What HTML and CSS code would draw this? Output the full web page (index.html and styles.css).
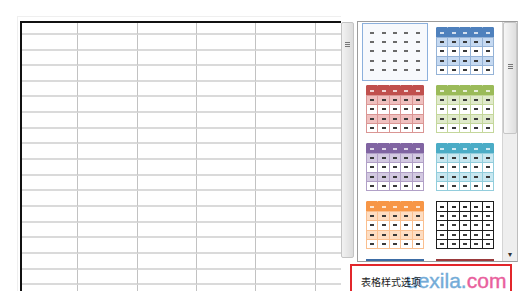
FILE: index.html
```html
<!DOCTYPE html>
<html lang="zh-CN">
<head>
    <meta charset="UTF-8">
    <meta name="viewport" content="width=device-width, initial-scale=1.0">
    <title>表格样式</title>
    <link rel="stylesheet" href="styles.css">
</head>
<body>
    <div class="app">
        <div class="sheet-area">
            <div class="frame">
                <div class="sheet" id="sheet">
                    <!-- cells are added by the script -->
                </div>
            </div>
        </div>

        <div class="vscroll">
            <div class="vthumb"><span class="grip"></span></div>
        </div>

        <div class="pane">
            <div class="gallery">
                <div class="items">
                    <div class="item selected"><div class="thumb plain"></div></div>
                    <div class="item"><div class="thumb blue"></div></div>
                    <div class="item"><div class="thumb red"></div></div>
                    <div class="item"><div class="thumb green"></div></div>
                    <div class="item"><div class="thumb purple"></div></div>
                    <div class="item"><div class="thumb cyan"></div></div>
                    <div class="item"><div class="thumb orange"></div></div>
                    <div class="item"><div class="thumb black"></div></div>
                    <div class="item"><div class="thumb navy"></div></div>
                    <div class="item"><div class="thumb maroon"></div></div>
                </div>
                <div class="gscroll">
                    <div class="gthumb"><span class="grip"></span></div>
                    <div class="gtrack"></div>
                    <div class="gdown">&#9662;</div>
                </div>
            </div>
            <div class="section">
                <span class="label">表格样式选项</span>
            </div>
        </div>
    </div>

    <div class="watermark"><span class="wm-blue">uexila.</span><span class="wm-pink">com</span></div>
    <div class="highlight"></div>

    <script>
        const sheet = document.getElementById('sheet');
        for (let i = 0; i < 18 * 6; i++) {
            const cell = document.createElement('div');
            cell.className = 'cell';
            sheet.appendChild(cell);
        }

        document.querySelectorAll('.thumb').forEach(thumb => {
            for (let r = 0; r < 5; r++) {
                for (let c = 0; c < 5; c++) {
                    const cell = document.createElement('div');
                    cell.className = 'c';
                    if (r === 0) cell.classList.add('hd');
                    if (r === 1 || r === 3) cell.classList.add('band');
                    thumb.appendChild(cell);
                }
            }
        });
    </script>
</body>
</html>
```

FILE: styles.css
```css
body {
    margin: 0;
    background-color: #fff;
    font-family: "Noto Sans CJK SC", "Liberation Sans", sans-serif;
    overflow: hidden;
}
.app {
    display: flex;
    width: 518px;
    height: 291px;
    overflow: hidden;
}

/* worksheet */
.sheet-area {
    width: 341px;
    flex-shrink: 0;
    padding: 16px 0 0 17px;
    box-sizing: border-box;
}
.frame {
    height: 100%;
    border-top: 1px solid #efefef;
    border-left: 1px solid #efefef;
    padding: 4px 0 0 2px;
    box-sizing: border-box;
}
.sheet {
    display: grid;
    grid-template-columns: 56px 60px 59px 59px 60px 1fr;
    grid-template-rows: 12px 16px 15px 16px 15px 16px 16px 15px 16px 16px 15px 16px 16px 15px 16px 16px 15px 16px;
    border-top: 2px solid #111;
    border-left: 2px solid #111;
}
.cell {
    box-sizing: border-box;
    border-bottom: 2px solid #dadada;
    border-right: 1px solid #c2c2c2;
}
.cell:nth-child(6n) {
    border-right: none;
}

/* sheet scrollbar */
.vscroll {
    width: 13px;
    flex-shrink: 0;
    padding-top: 22px;
}
.vthumb {
    height: 236px;
    box-sizing: border-box;
    border: 1px solid #c4c4c4;
    border-radius: 2px;
    background: linear-gradient(to right, #f2f2f2, #dcdcdc);
    padding-top: 19px;
    display: flex;
    justify-content: center;
}
.grip {
    width: 5px;
    height: 5px;
    background: repeating-linear-gradient(to bottom, #777 0, #777 1px, transparent 1px, transparent 2px);
}

/* task pane */
.pane {
    flex: 1;
    padding: 21px 2px 0 3px;
    display: flex;
    flex-direction: column;
}
.gallery {
    display: flex;
    height: 241px;
    border: 1px solid #9c9c9c;
    border-right-color: #bdbdbd;
    box-sizing: border-box;
}
.items {
    width: 144px;
    padding: 1px 0 0 4px;
    display: grid;
    grid-template-columns: 66px 66px;
    grid-auto-rows: 58px;
    column-gap: 4px;
    overflow: hidden;
    box-sizing: border-box;
}
.item {
    padding: 4px;
    box-sizing: border-box;
    border: 1px solid transparent;
}
.item.selected {
    border-color: #8cb0dc;
    background-color: #f7f9fc;
}
.thumb {
    --line: #fff;
    --hd: #fff;
    --band: #fff;
    --dash: #3a3a3a;
    --hdash: rgba(255, 255, 255, 0.75);
    width: 58px;
    height: 48px;
    margin: -1px;
    display: grid;
    grid-template-columns: repeat(5, 1fr);
    grid-template-rows: 9px repeat(4, 1fr);
    gap: 1px;
    padding: 1px;
    box-sizing: border-box;
    background-color: var(--line);
}
.c {
    display: flex;
    align-items: center;
    justify-content: center;
    background-color: #fff;
}
.c::after {
    content: "";
    width: 4px;
    height: 2px;
    background-color: var(--dash);
}
.c.band {
    background-color: var(--band);
}
.c.hd {
    background-color: var(--hd);
    box-shadow: 1px 0 0 var(--hd), -1px 0 0 var(--hd), 0 -1px 0 var(--hd);
}
.c.hd::after {
    background-color: var(--hdash);
}

.thumb.plain {
    background-color: transparent;
    --dash: #6a6a6a;
    --hdash: #6a6a6a;
}
.thumb.plain .c {
    background-color: transparent;
    box-shadow: none;
}
.blue   { --line: #95b3d7; --hd: #4f81bd; --band: #c5d9f1; }
.red    { --line: #da9694; --hd: #c0504d; --band: #efc0bf; }
.green  { --line: #c4d79b; --hd: #9bbb59; --band: #e0eacb; }
.purple { --line: #b1a0c7; --hd: #8064a2; --band: #d3c9e1; }
.cyan   { --line: #92cddc; --hd: #4bacc6; --band: #c8e7f0; }
.orange { --line: #fabf8f; --hd: #f79646; --band: #fdddc2; }
.black  { --line: #1e1e1e; --hd: #fff; --band: #fff; --hdash: #2a2a2a; }
.black .c.hd {
    box-shadow: none;
}
.navy   { --line: #3d6ca5; --hd: #3d6ca5; }
.maroon { --line: #9a3a3c; --hd: #9a3a3c; }

/* gallery scrollbar */
.gscroll {
    width: 14px;
    margin-left: auto;
    display: flex;
    flex-direction: column;
    background-color: #eeeeee;
    border-left: 1px solid #d4d4d4;
}
.gthumb {
    height: 112px;
    box-sizing: border-box;
    border: 1px solid #c6c6c6;
    border-radius: 2px;
    background: linear-gradient(to right, #f6f6f6, #dedede);
    padding-top: 41px;
    display: flex;
    justify-content: center;
}
.gtrack {
    flex: 1;
}
.gdown {
    height: 14px;
    font-size: 8px;
    line-height: 14px;
    text-align: center;
    color: #333;
}

.section {
    padding: 14px 0 0 4px;
    font-size: 10px;
    line-height: 12px;
}
.label {
    position: relative;
    z-index: 2;
    color: #1d1d1d;
}

/* screenshot annotations */
.watermark {
    position: absolute;
    left: 406px;
    top: 270px;
    font-family: "Liberation Sans", Arial, sans-serif;
    font-size: 21px;
    line-height: 21px;
    z-index: 1;
    -webkit-text-stroke: 0.4px currentColor;
}
.wm-blue {
    color: #74acd8;
}
.wm-pink {
    color: #e9609d;
}
.highlight {
    position: absolute;
    left: 350px;
    top: 264px;
    width: 162px;
    height: 40px;
    box-sizing: border-box;
    border: 2px solid #e2262b;
    z-index: 3;
}
```
